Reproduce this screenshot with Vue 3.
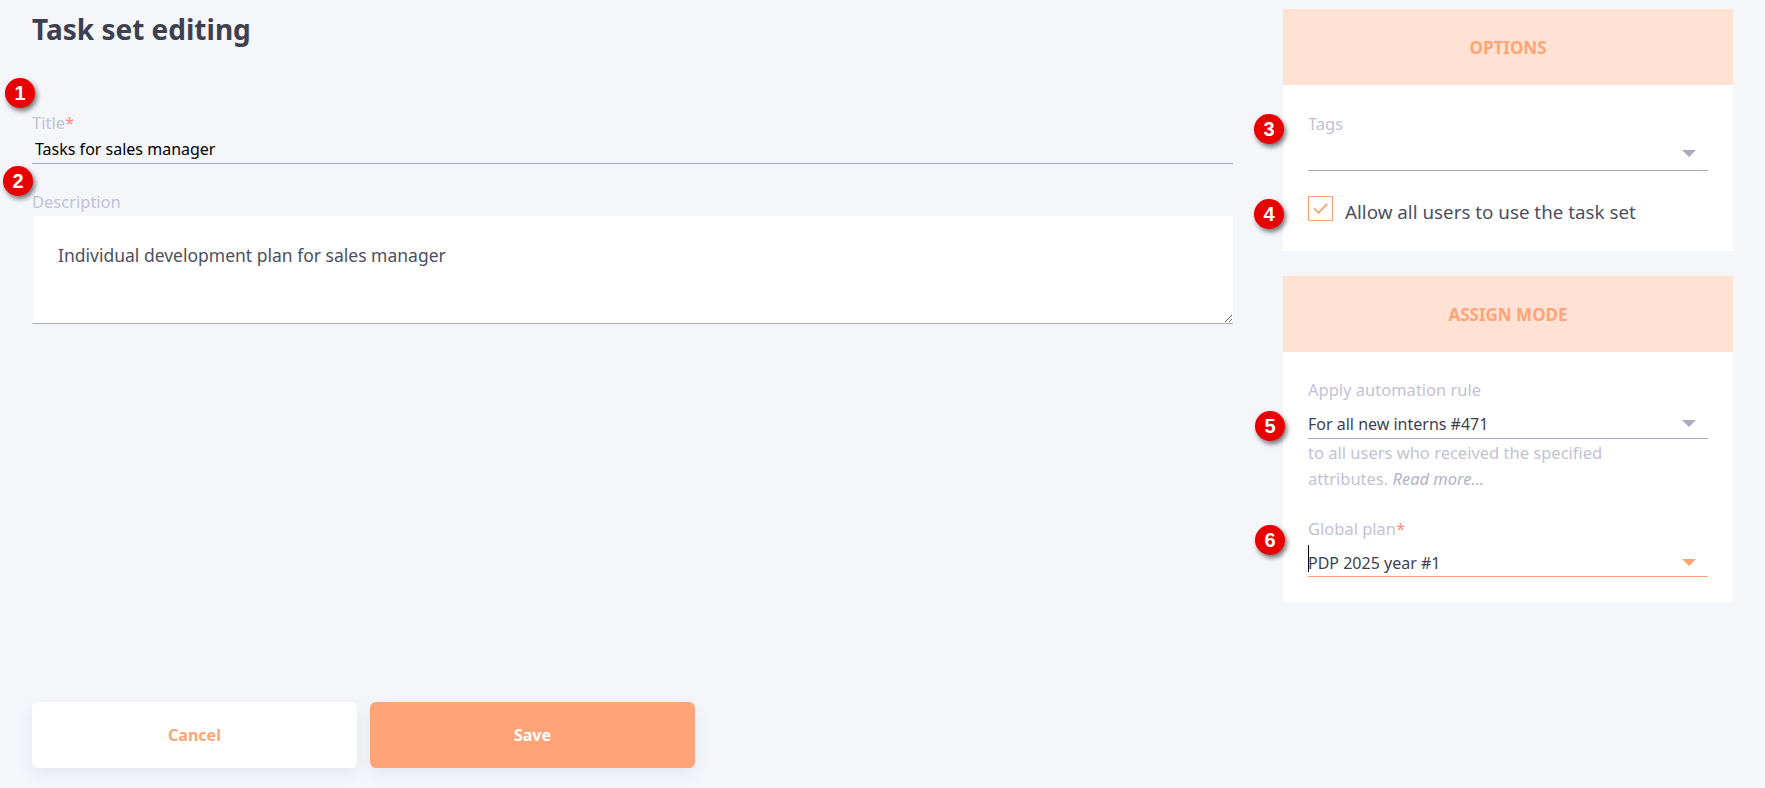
<template>
  <div class="page">
    <main class="main">
      <h1 class="title">Task set editing</h1>

      <div class="field title-field">
        <span class="marker m1">1</span>
        <label class="label">Title<span class="req">*</span></label>
        <input class="text-input" value="Tasks for sales manager" />
      </div>

      <div class="field desc-field">
        <span class="marker m2">2</span>
        <label class="label">Description</label>
        <textarea class="desc" :value="description"></textarea>
      </div>

      <div class="actions">
        <button class="btn cancel">Cancel</button>
        <button class="btn save">Save</button>
      </div>
    </main>

    <aside class="side">
      <section class="card options">
        <header class="card-head">OPTIONS</header>
        <div class="card-body">
          <div class="field">
            <span class="marker m3">3</span>
            <label class="label">Tags</label>
            <div class="select"><span class="arrow"></span></div>
          </div>
          <div class="check-row">
            <span class="marker m4">4</span>
            <span class="check">
              <svg width="15" height="11" viewBox="0 0 15 11">
                <path d="M1 5.5 L5.6 9.6 L14 1" fill="none" stroke="#ffa477" stroke-width="1.9" />
              </svg>
            </span>
            <span class="check-text">Allow all users to use the task set</span>
          </div>
        </div>
      </section>

      <section class="card assign">
        <header class="card-head">ASSIGN MODE</header>
        <div class="card-body">
          <div class="field">
            <span class="marker m5">5</span>
            <label class="label">Apply automation rule</label>
            <div class="select"><span class="value">For all new interns #471</span><span class="arrow"></span></div>
            <p class="hint">to all users who received the specified attributes. <em>Read more...</em></p>
          </div>
          <div class="field plan">
            <span class="marker m6">6</span>
            <label class="label">Global plan<span class="req">*</span></label>
            <div class="select active">
              <span class="caret"></span>
              <span class="value">PDP 2025 year #1</span>
              <span class="arrow"></span>
            </div>
          </div>
        </div>
      </section>
    </aside>
  </div>
</template>

<script setup>
const description = 'Individual development plan for sales manager'
</script>

<style>
html,
body {
  margin: 0;
  background: #f4f6fa;
}
</style>

<style scoped>
.page {
  display: flex;
  height: 788px;
  box-sizing: border-box;
  padding: 0 32px 20px 32px;
  font-family: "Noto Sans", "Open Sans", sans-serif;
  background: #f4f6fa;
  overflow: hidden;
}

.main {
  width: 1201px;
  display: flex;
  flex-direction: column;
}

.title {
  margin: 9px 0 0;
  font-size: 28px;
  line-height: 40px;
  font-weight: 700;
  color: #3d404f;
}

.field {
  position: relative;
}

.title-field {
  margin-top: 63px;
}

.desc-field {
  margin-top: 27px;
}

.label {
  display: block;
  font-size: 16.5px;
  line-height: 22px;
  color: #c2c2d6;
}

.req {
  color: #ff8a80;
}

.text-input {
  display: block;
  width: 100%;
  box-sizing: border-box;
  height: 30px;
  padding: 0 3px;
  border: 0;
  border-bottom: 1px solid #a9a9bf;
  background: transparent;
  font: 16px "Noto Sans", "Open Sans", sans-serif;
  color: #000;
  outline: none;
}

.desc {
  display: block;
  width: 1200px;
  height: 108px;
  box-sizing: border-box;
  margin: 3px 0 0 1px;
  padding: 26px 25px;
  border: 0;
  border-bottom: 1px solid #a9a9bf;
  border-radius: 0;
  background: #fff;
  font: 17.5px/26px "Noto Sans", "Open Sans", sans-serif;
  color: #4d4f60;
  outline: none;
}

.actions {
  margin-top: auto;
  display: flex;
  gap: 13px;
}

.btn {
  width: 325px;
  height: 66px;
  border: 0;
  border-radius: 6px;
  font: 700 16px "Noto Sans", "Open Sans", sans-serif;
  box-shadow: 0 6px 16px rgba(60, 70, 110, 0.08);
}

.cancel {
  background: #fff;
  color: #ffa477;
}

.save {
  background: #ffa477;
  color: #fff;
}

.side {
  width: 450px;
  margin-left: 50px;
  padding-top: 9px;
  display: flex;
  flex-direction: column;
  gap: 25px;
}

.card {
  background: #fff;
}

.card-head {
  height: 76px;
  display: flex;
  align-items: center;
  justify-content: center;
  background: #ffe2d3;
  color: #ffa477;
  font-size: 17px;
  font-weight: 700;
}

.card-body {
  padding: 27px 25px 0;
}

.options {
  height: 242px;
}

.options .card-body {
  padding-top: 28px;
}

.assign {
  height: 326px;
}

.select {
  position: relative;
  height: 36px;
  box-sizing: border-box;
  border-bottom: 1px solid #a9a9bf;
  display: flex;
  align-items: center;
  padding-top: 6px;
}

.assign .select {
  height: 38px;
  padding-top: 8px;
}

.assign .plan .select {
  height: 37px;
  padding-top: 10px;
}

.select.active {
  border-bottom-color: #ffa477;
}

.value {
  font-size: 16px;
  color: #3d404f;
}

.arrow {
  position: absolute;
  right: 12px;
  top: 15px;
  width: 0;
  height: 0;
  border-left: 7px solid transparent;
  border-right: 7px solid transparent;
  border-top: 7px solid #a9a9bf;
}

.assign .arrow {
  top: 19px;
}

.active .arrow {
  border-top-color: #ffa477;
}

.caret {
  position: absolute;
  left: 0;
  top: 5px;
  width: 1px;
  height: 27px;
  background: #000;
}

.check-row {
  position: relative;
  display: flex;
  align-items: flex-start;
  margin-top: 25px;
}

.check {
  width: 25px;
  height: 25px;
  box-sizing: border-box;
  border: 1px solid #ffa477;
  display: flex;
  align-items: center;
  justify-content: center;
}

.check-text {
  margin: 3px 0 0 12px;
  font-size: 18.8px;
  line-height: 26px;
  color: #4d4f60;
}

.hint {
  margin: 1px 0 0;
  width: 320px;
  font-size: 16.5px;
  line-height: 26px;
  color: #c2c2d6;
}

.hint em {
  color: #b3b3c6;
}

.plan {
  margin-top: 26px;
}

.marker {
  position: absolute;
  width: 30px;
  height: 30px;
  border-radius: 50%;
  background: #e90000;
  color: #fff;
  font: 700 20px/30px "Liberation Sans", sans-serif;
  text-align: center;
  box-shadow: 2px 3px 5px rgba(0, 0, 0, 0.55);
}

.m1 { left: -27px; top: -34px; }
.m2 { left: -29px; top: -25px; }
.m3 { left: -54px; top: 1px; }
.m4 { left: -54px; top: 3px; }
.m5 { left: -53px; top: 32px; }
.m6 { left: -53px; top: 7px; }
</style>
